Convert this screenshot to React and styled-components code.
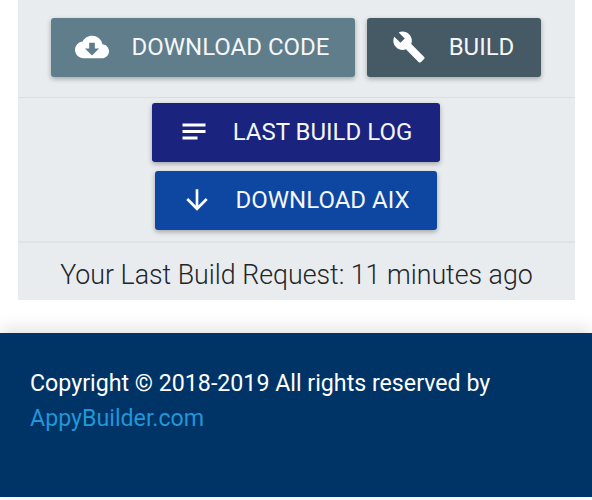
import styled, { createGlobalStyle } from "styled-components";
import { MdCloudDownload, MdBuild, MdArrowDownward } from "react-icons/md";

const GlobalStyle = createGlobalStyle`
  html, body {
    margin: 0;
    padding: 0;
    background: #fff;
  }
  body {
    font-family: Roboto, "Liberation Sans", sans-serif;
    overflow: hidden;
  }
`;

const Page = styled.div`
  width: 592px;
  height: 500px;
  display: flex;
  flex-direction: column;
`;

const Panel = styled.section`
  margin: 0 17px 0 18px;
  height: 300px;
  background: #e9ecef;
  display: flex;
  flex-direction: column;
`;

const TopRow = styled.div`
  height: 98px;
  padding: 18px 1px 0 0;
  box-sizing: border-box;
  display: flex;
  justify-content: center;
  gap: 12px;
  border-bottom: 1px solid #dcdfe2;
`;

const Stack = styled.div`
  height: 145px;
  padding: 5px 1px 0 0;
  box-sizing: border-box;
  display: flex;
  flex-direction: column;
  align-items: center;
  gap: 9px;
  border-bottom: 2px solid #e0e3e6;
`;

const Button = styled.a`
  width: ${(p) => p.$width}px;
  height: 59px;
  padding: 0 2px 2px 0;
  box-sizing: border-box;
  background: ${(p) => p.$color};
  border-radius: 3px;
  box-shadow: 0 2px 5px rgba(0, 0, 0, 0.3);
  color: #f4f6f8;
  font-size: 24px;
  display: flex;
  align-items: center;
  justify-content: center;
  gap: 23px;

  svg {
    flex-shrink: 0;
    color: #fff;
  }
`;

const BuildRequest = styled.p`
  margin: 0;
  padding-top: 6px;
  flex: 1;
  display: flex;
  align-items: center;
  justify-content: center;
  color: #212529;
  font-size: 26.75px;
  font-weight: 300;
`;

const Footer = styled.footer`
  margin-top: 33px;
  height: 164px;
  box-sizing: border-box;
  padding: 33px 30px 0;
  background: #003366;
  box-shadow: 0 -4px 16px rgba(0, 0, 0, 0.12);
  color: #fff;
  font-size: 23.2px;
  line-height: 35px;
`;

const FooterLink = styled.a`
  display: block;
  color: #2196d8;
`;

function LinesIcon() {
  return (
    <svg width="32" height="32" viewBox="0 0 32 32" fill="currentColor">
      <rect x="4.5" y="7.5" width="23" height="3" />
      <rect x="4.5" y="14" width="23" height="3" />
      <rect x="4.5" y="20.5" width="15" height="3" />
    </svg>
  );
}

export default function App() {
  return (
    <Page>
      <GlobalStyle />
      <Panel>
        <TopRow>
          <Button $width={304} $color="#607d8b">
            <MdCloudDownload size={34} />
            DOWNLOAD CODE
          </Button>
          <Button $width={174} $color="#455a64">
            <MdBuild size={34} />
            BUILD
          </Button>
        </TopRow>
        <Stack>
          <Button $width={288} $color="#1a237e">
            <LinesIcon />
            LAST BUILD LOG
          </Button>
          <Button $width={282} $color="#0d47a1">
            <MdArrowDownward size={32} />
            DOWNLOAD AIX
          </Button>
        </Stack>
        <BuildRequest>Your Last Build Request: 11 minutes ago</BuildRequest>
      </Panel>
      <Footer>
        Copyright © 2018-2019 All rights reserved by
        <FooterLink>AppyBuilder.com</FooterLink>
      </Footer>
    </Page>
  );
}
